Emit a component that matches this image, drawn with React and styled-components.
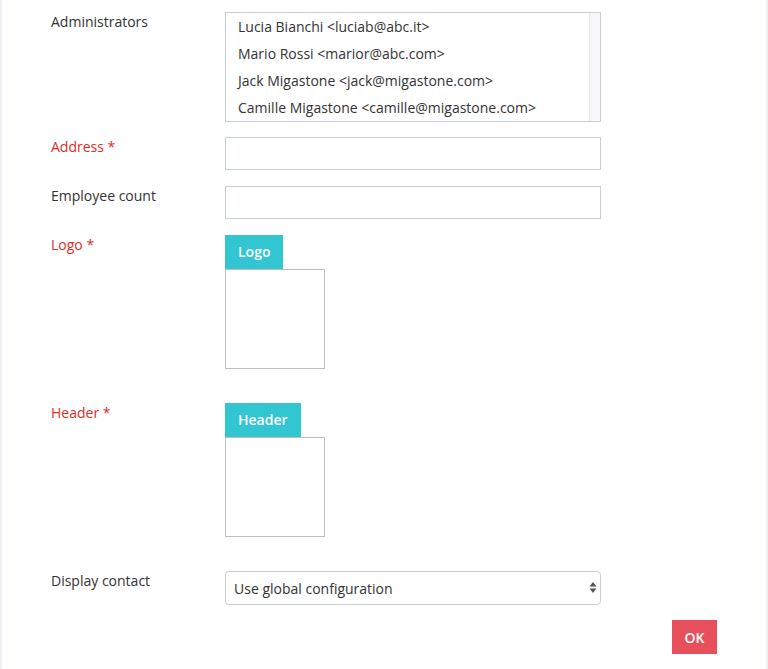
import styled, { createGlobalStyle } from 'styled-components';

const GlobalStyle = createGlobalStyle`
	html, body {
		margin: 0;
		background: #eef1f5;
	}
	body {
		font-family: "Open Sans", "Liberation Sans", sans-serif;
		font-size: 14px;
		color: #333;
	}
`;

const Panel = styled.div`
	margin: 0 2px;
	min-height: 669px;
	background: #fff;
	padding-top: 12px;
	box-sizing: border-box;
`;

const Form = styled.form`
	display: flex;
	flex-direction: column;
	padding-left: 49px;
`;

const Row = styled.div`
	display: grid;
	grid-template-columns: 174px 376px;
	align-items: start;
	margin-bottom: ${(p) => p.$gap || 15}px;
`;

const Label = styled.label`
	line-height: 20px;
	color: ${(p) => (p.$required ? '#e02b27' : '#333')};
`;

const ListBox = styled.div`
	display: flex;
	height: 110px;
	border: 1px solid #c5cedb;
	box-sizing: border-box;
	overflow: hidden;
`;

const Options = styled.ul`
	flex: 1;
	list-style: none;
	margin: 0;
	padding: 0;
`;

const Option = styled.li`
	height: 27px;
	line-height: 27px;
	padding: 0 12px;
	white-space: nowrap;
`;

const Track = styled.div`
	width: 10px;
	background: #f8f8f8;
	border-left: 1px solid #e6e6e6;
`;

const TextInput = styled.input`
	height: 33px;
	width: 100%;
	box-sizing: border-box;
	border: 1px solid #c5cedb;
	padding: 0 10px;
	font: inherit;
	outline: none;
`;

const Uploader = styled.div`
	display: flex;
	flex-direction: column;
	align-items: flex-start;
`;

const Tab = styled.div`
	height: 34px;
	padding: 0 13px;
	background: #32c5d2;
	color: #fff;
	font-size: 14px;
	font-weight: 600;
	line-height: 34px;
`;

const Preview = styled.div`
	width: 100px;
	height: 100px;
	box-sizing: border-box;
	border: 1px solid #bdbdbd;
`;

const SelectWrap = styled.div`
	position: relative;
`;

const Select = styled.select`
	width: 100%;
	height: 34px;
	box-sizing: border-box;
	appearance: none;
	background: #fff;
	border: 1px solid #c5cedb;
	border-radius: 4px;
	padding: 0 24px 0 8px;
	font: inherit;
	color: #333;
	outline: none;
`;

const Arrows = styled.svg`
	position: absolute;
	right: 4px;
	top: 10px;
	pointer-events: none;
`;

const Footer = styled.div`
	display: flex;
	justify-content: flex-end;
	padding-right: 49px;
`;

const OkButton = styled.button`
	height: 34px;
	width: 45px;
	border: none;
	background: #e7505a;
	color: #fff;
	font: inherit;
	font-weight: 600;
	font-size: 14px;
`;

const admins = [
	'Lucia Bianchi <luciab@abc.it>',
	'Mario Rossi <marior@abc.com>',
	'Jack Migastone <jack@migastone.com>',
	'Camille Migastone <camille@migastone.com>',
];

const App = () => (
	<>
		<GlobalStyle />
		<Panel>
			<Form onSubmit={(e) => e.preventDefault()}>
				<Row>
					<Label>Administrators</Label>
					<ListBox>
						<Options>
							{admins.map((a) => (
								<Option key={a}>{a}</Option>
							))}
						</Options>
						<Track />
					</ListBox>
				</Row>
				<Row $gap={16}>
					<Label $required>Address *</Label>
					<TextInput />
				</Row>
				<Row $gap={16}>
					<Label>Employee count</Label>
					<TextInput />
				</Row>
				<Row $gap={34}>
					<Label $required>Logo *</Label>
					<Uploader>
						<Tab>Logo</Tab>
						<Preview />
					</Uploader>
				</Row>
				<Row $gap={34}>
					<Label $required>Header *</Label>
					<Uploader>
						<Tab>Header</Tab>
						<Preview />
					</Uploader>
				</Row>
				<Row>
					<Label>Display contact</Label>
					<SelectWrap>
						<Select defaultValue="global">
							<option value="global">Use global configuration</option>
						</Select>
						<Arrows width="8" height="13" viewBox="0 0 8 13">
							<path d="M4 1 L7.5 5.5 H0.5 Z" fill="#555" />
							<path d="M4 12 L7.5 7.5 H0.5 Z" fill="#555" />
						</Arrows>
					</SelectWrap>
				</Row>
			</Form>
			<Footer>
				<OkButton type="button">OK</OkButton>
			</Footer>
		</Panel>
	</>
);

export default App;
